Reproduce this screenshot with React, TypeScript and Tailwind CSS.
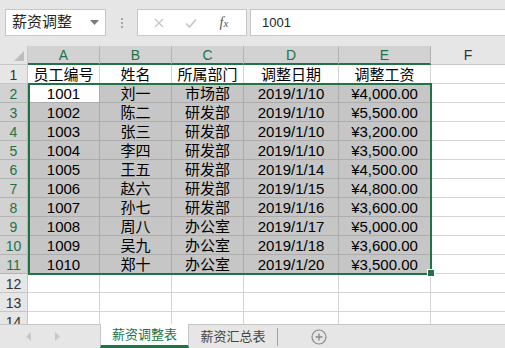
import React from 'react';

const cols = ['A', 'B', 'C', 'D', 'E', 'F'];
const titles = ['员工编号', '姓名', '所属部门', '调整日期', '调整工资'];
const rows = [
  ['1001', '刘一', '市场部', '2019/1/10', '¥4,000.00'],
  ['1002', '陈二', '研发部', '2019/1/10', '¥5,500.00'],
  ['1003', '张三', '研发部', '2019/1/10', '¥3,200.00'],
  ['1004', '李四', '研发部', '2019/1/10', '¥3,500.00'],
  ['1005', '王五', '研发部', '2019/1/14', '¥4,500.00'],
  ['1006', '赵六', '研发部', '2019/1/15', '¥4,800.00'],
  ['1007', '孙七', '研发部', '2019/1/16', '¥3,600.00'],
  ['1008', '周八', '办公室', '2019/1/17', '¥5,000.00'],
  ['1009', '吴九', '办公室', '2019/1/18', '¥3,600.00'],
  ['1010', '郑十', '办公室', '2019/1/20', '¥3,500.00'],
];

const TopBar = () => (
  <div className="h-[46px] shrink-0 flex items-start pt-[9px] pl-[5px] bg-[#e6e6e6]">
    <div className="w-[101px] h-[27px] bg-white border border-[#c6c6c6] flex items-center pl-[6px] pr-[6px] justify-between">
      <span className="text-[15px] text-[#222]">薪资调整</span>
      <svg width="9" height="5" viewBox="0 0 9 5">
        <path d="M0 0h9L4.5 5z" fill="#7a7a7a" />
      </svg>
    </div>
    <div className="w-[31px] h-[27px] flex flex-col items-center justify-center gap-[2px]">
      <span className="w-[2px] h-[2px] bg-[#a8a8a8]" />
      <span className="w-[2px] h-[2px] bg-[#a8a8a8]" />
      <span className="w-[2px] h-[2px] bg-[#a8a8a8]" />
    </div>
    <div className="w-[110px] h-[27px] bg-white border border-[#c6c6c6] flex items-center">
      <div className="w-[42px] flex justify-center">
        <svg width="10" height="10" viewBox="0 0 10 10">
          <path d="M1 1l8 8M9 1l-8 8" stroke="#c4c4c4" strokeWidth="1.3" />
        </svg>
      </div>
      <div className="w-[22px] flex justify-center">
        <svg width="12" height="10" viewBox="0 0 12 10">
          <path d="M1 5.5l3.5 3.5L11 1.5" stroke="#c4c4c4" strokeWidth="1.6" fill="none" />
        </svg>
      </div>
      <div className="flex-1 flex justify-center">
        <span className="italic text-[14px] text-[#555] font-['Liberation_Serif',serif]">
          f<span className="text-[11px]">x</span>
        </span>
      </div>
    </div>
    <div className="ml-[3px] flex-1 h-[27px] bg-white border border-r-0 border-[#c6c6c6] flex items-center pl-[11px]">
      <span className="text-[13px] text-[#222]">1001</span>
    </div>
  </div>
);

const Grid = () => (
  <div className="relative flex-1 overflow-hidden bg-white">
    <div className="grid grid-cols-[28px_72px_72px_72px_95px_92px_1fr] auto-rows-[19px]">
      <div className="relative bg-[#e6e6e6] border-r border-b border-[#c6c6c6]">
        <svg className="absolute right-[3px] bottom-[3px]" width="10" height="10" viewBox="0 0 10 10">
          <path d="M10 0v10H0z" fill="#bdbdbd" />
        </svg>
      </div>
      {cols.map((c, i) =>
        i < 5 ? (
          <div
            key={c}
            className="flex items-center justify-center pt-[1px] bg-[#d2d2d2] border-r border-[#b4b4b4] border-b-2 border-b-[#217346] text-[14px] text-[#217346]"
          >
            {c}
          </div>
        ) : (
          <div
            key={c}
            className="flex items-center justify-center pt-[1px] bg-[#e6e6e6] border-b border-[#c6c6c6] text-[14px] text-[#333]"
          >
            {c}
          </div>
        )
      )}

      <div className="flex items-center justify-center pt-[2px] bg-[#e6e6e6] border-r border-b border-[#c6c6c6] text-[14px] text-[#333]">
        1
      </div>
      {titles.map((t) => (
        <div
          key={t}
          className="flex items-center justify-center pt-[2px] border-r border-b border-[#d4d4d4] text-[15px] text-black"
        >
          {t}
        </div>
      ))}
      <div className="border-b border-[#d4d4d4]" />

      {rows.map((r, ri) => (
        <React.Fragment key={r[0]}>
          <div className="flex items-center justify-center pt-[2px] bg-[#d2d2d2] border-r border-b border-[#b4b4b4] text-[14px] text-[#217346]">
            {ri + 2}
          </div>
          {r.map((v, ci) => (
            <div
              key={ci}
              className={
                'flex items-center justify-center pt-[2px] border-r border-b border-[#acacac] text-[15px] text-black ' +
                (ri === 0 && ci === 0 ? 'bg-white' : 'bg-[#c6c6c6]')
              }
            >
              {v}
            </div>
          ))}
          <div className="border-b border-[#d4d4d4]" />
        </React.Fragment>
      ))}

      {[12, 13, 14].map((n) => (
        <React.Fragment key={n}>
          <div className="flex items-center justify-center pt-[2px] bg-[#e6e6e6] border-r border-b border-[#c6c6c6] text-[14px] text-[#333]">
            {n}
          </div>
          {cols.map((c, i) => (
            <div key={c} className={'border-b border-[#d4d4d4] ' + (i < 5 ? 'border-r' : '')} />
          ))}
        </React.Fragment>
      ))}
    </div>
    {/* selection outline */}
    <div className="absolute left-[28px] top-[37px] w-[404px] h-[192px] border-2 border-[#217346]" />
    <div className="absolute left-[427px] top-[223px] w-[8px] h-[8px] bg-[#217346] border border-white" />
  </div>
);

const TabBar = () => (
  <div className="h-[24px] shrink-0 flex bg-[#e6e6e6] border-t border-[#c6c6c6]">
    <div className="w-[100px] flex items-center">
      <svg className="ml-[26px]" width="5" height="9" viewBox="0 0 5 9">
        <path d="M5 0v9L0 4.5z" fill="#c8c8c8" />
      </svg>
      <svg className="ml-[24px]" width="5" height="9" viewBox="0 0 5 9">
        <path d="M0 0v9l5-4.5z" fill="#c8c8c8" />
      </svg>
    </div>
    <div className="w-[89px] -mt-[1px] bg-white border-l border-r border-[#c6c6c6] border-b-[3px] border-b-[#217346] flex items-center justify-center text-[13px] text-[#217346]">
      薪资调整表
    </div>
    <div className="w-[88px] flex items-center justify-center text-[13px] text-[#444]">
      薪资汇总表
    </div>
    <div className="w-[1px] h-[18px] mt-[3px] bg-[#a0a0a0]" />
    <div className="w-[82px] flex items-center justify-center">
      <svg width="16" height="16" viewBox="0 0 16 16">
        <circle cx="8" cy="8" r="7" fill="none" stroke="#8a8a8a" strokeWidth="1.2" />
        <path d="M8 4.5v7M4.5 8h7" stroke="#8a8a8a" strokeWidth="1.4" />
      </svg>
    </div>
  </div>
);

export default function App() {
  return (
    <div className="w-[505px] h-[348px] flex flex-col overflow-hidden bg-[#e6e6e6] font-['Liberation_Sans','Noto_Sans_CJK_SC',sans-serif]">
      <TopBar />
      <Grid />
      <TabBar />
    </div>
  );
}
